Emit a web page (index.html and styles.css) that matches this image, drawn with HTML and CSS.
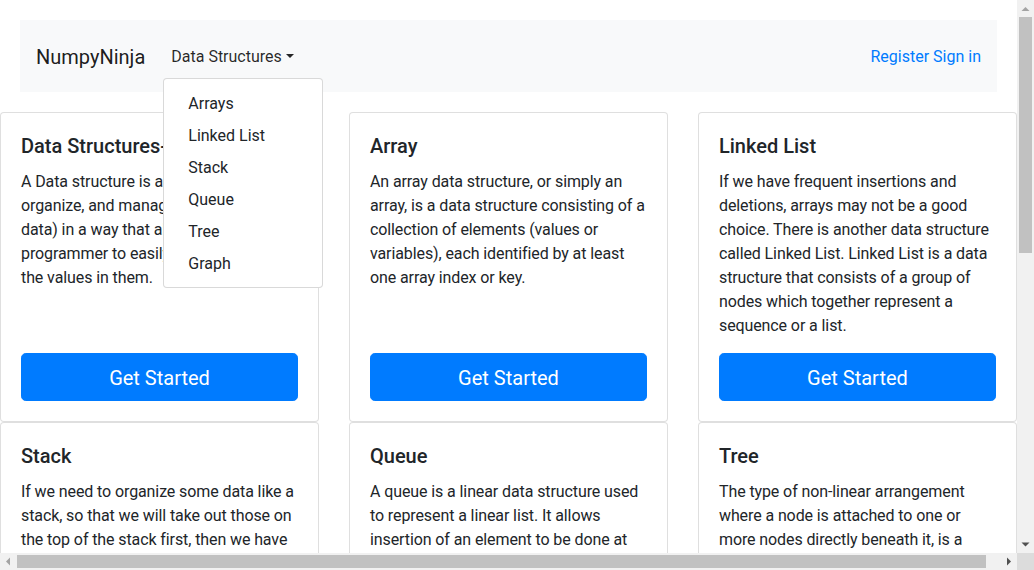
FILE: index.html
```html
<!DOCTYPE html>
<html lang="en">
<head>
<meta charset="utf-8">
<title>NumpyNinja</title>
<link rel="stylesheet" href="styles.css">
</head>
<body>
<div class="page">
<nav class="navbar">
  <a class="brand" href="#">NumpyNinja</a>
  <div class="dropdown">
    <a class="nav-link dropdown-toggle" href="#">Data Structures</a>
    <div class="dropdown-menu">
      <a class="dropdown-item" href="#">Arrays</a>
      <a class="dropdown-item" href="#">Linked List</a>
      <a class="dropdown-item" href="#">Stack</a>
      <a class="dropdown-item" href="#">Queue</a>
      <a class="dropdown-item" href="#">Tree</a>
      <a class="dropdown-item" href="#">Graph</a>
    </div>
  </div>
  <div class="nav-right">
    <a class="auth-link" href="#">Register</a> <a class="auth-link" href="#">Sign in</a>
  </div>
</nav>
<div class="row">
  <div class="col">
    <div class="card">
      <h5 class="card-title">Data Structures-Introduction</h5>
      <p class="card-text">A Data structure is a way to store, organize, and manage the data (raw data) in a way that always helps a programmer to easily find and retrieve the values in them.</p>
      <a class="btn" href="#">Get Started</a>
    </div>
  </div>
  <div class="col">
    <div class="card">
      <h5 class="card-title">Array</h5>
      <p class="card-text">An array data structure, or simply an array, is a data structure consisting of a collection of elements (values or variables), each identified by at least one array index or key.</p>
      <a class="btn" href="#">Get Started</a>
    </div>
  </div>
  <div class="col">
    <div class="card">
      <h5 class="card-title">Linked List</h5>
      <p class="card-text">If we have frequent insertions and deletions, arrays may not be a good choice. There is another data structure called Linked List. Linked List is a data structure that consists of a group of nodes which together represent a sequence or a list.</p>
      <a class="btn" href="#">Get Started</a>
    </div>
  </div>
  <div class="col">
    <div class="card">
      <h5 class="card-title">Stack</h5>
      <p class="card-text">If we need to organize some data like a stack, so that we will take out those on the top of the stack first, then we have to use the Stack data structure. It follows the Last In First Out (LIFO) principle.</p>
      <a class="btn" href="#">Get Started</a>
    </div>
  </div>
  <div class="col">
    <div class="card">
      <h5 class="card-title">Queue</h5>
      <p class="card-text">A queue is a linear data structure used to represent a linear list. It allows insertion of an element to be done at one end and deletion of an element to be done at the other end.</p>
      <a class="btn" href="#">Get Started</a>
    </div>
  </div>
  <div class="col">
    <div class="card">
      <h5 class="card-title">Tree</h5>
      <p class="card-text">The type of non-linear arrangement where a node is attached to one or more nodes directly beneath it, is a tree. The topmost node is called the root of the tree.</p>
      <a class="btn" href="#">Get Started</a>
    </div>
  </div>
  <div class="col">
    <div class="card">
      <h5 class="card-title">Graph</h5>
      <p class="card-text">A graph is a non-linear data structure consisting of nodes (vertices) and the edges that connect pairs of those nodes together.</p>
      <a class="btn" href="#">Get Started</a>
    </div>
  </div>
</div>
</div>

<div class="vscroll" aria-hidden="true">
  <div class="sb-btn"><svg width="17" height="17" viewBox="0 0 17 17"><path d="M4.5 11h8L8.5 7z" fill="#a3a3a3"/></svg></div>
  <div class="sb-track v"><div class="sb-thumb v"></div></div>
  <div class="sb-btn"><svg width="17" height="17" viewBox="0 0 17 17"><path d="M4.5 6.5h8L8.5 10.5z" fill="#505050"/></svg></div>
</div>
<div class="hscroll" aria-hidden="true">
  <div class="sb-btn"><svg width="17" height="17" viewBox="0 0 17 17"><path d="M10 4.5v8L6 8.5z" fill="#a3a3a3"/></svg></div>
  <div class="sb-track h"><div class="sb-thumb h"></div></div>
  <div class="sb-btn"><svg width="17" height="17" viewBox="0 0 17 17"><path d="M7 4.5v8L11 8.5z" fill="#505050"/></svg></div>
</div>
<div class="sb-corner" aria-hidden="true"></div>
</body>
</html>
```
FILE: styles.css
```css
* { box-sizing: border-box; }
html, body { margin: 0; }
html { overflow: hidden; }
body {
  font-family: Roboto, "Helvetica Neue", Arial, "Noto Sans", sans-serif;
  font-size: 16px;
  line-height: 1.5;
  color: #212529;
  background: #fff;
}
a { text-decoration: none; }

.page { width: 1017px; }

/* browser scrollbars (drawn over the page edge) */
.vscroll {
  position: fixed;
  top: 0;
  right: 0;
  width: 17px;
  height: 553px;
  background: #f1f1f1;
  display: flex;
  flex-direction: column;
  z-index: 100;
}
.hscroll {
  position: fixed;
  left: 0;
  bottom: 0;
  width: 1017px;
  height: 17px;
  background: #f1f1f1;
  display: flex;
  z-index: 100;
}
.sb-corner {
  position: fixed;
  right: 0;
  bottom: 0;
  width: 17px;
  height: 17px;
  background: #dcdcdc;
  z-index: 100;
}
.sb-btn { flex: 0 0 17px; width: 17px; height: 17px; }
.sb-btn svg { display: block; }
.sb-track { flex: 1; display: flex; }
.sb-track.v { flex-direction: column; padding: 0 2px; }
.sb-track.h { padding: 2px 0; }
.sb-thumb { background: #c1c1c1; }
.sb-thumb.v { height: 236px; }
.sb-thumb.h { width: 969px; }

.navbar {
  margin: 20px;
  padding: 16px;
  background: #f8f9fa;
  display: flex;
  align-items: center;
}
.brand {
  font-size: 20px;
  line-height: 30px;
  padding: 6px 0 4px;
  margin-right: 18px;
  color: rgba(0,0,0,.9);
}
.dropdown { position: relative; }
.nav-link {
  display: block;
  padding: 9px 8px 7px;
  color: rgba(0,0,0,.85);
}
.dropdown-toggle::after {
  content: "";
  display: inline-block;
  margin-left: .255em;
  vertical-align: .255em;
  border-top: .3em solid;
  border-right: .3em solid transparent;
  border-left: .3em solid transparent;
  border-bottom: 0;
}
.dropdown-menu {
  position: absolute;
  top: 100%;
  left: 0;
  z-index: 10;
  margin-top: 2px;
  min-width: 160px;
  padding: 8px 0;
  background: #fff;
  border: 1px solid rgba(0,0,0,.15);
  border-radius: 4px;
}
.dropdown-item {
  display: block;
  padding: 5px 24px 3px;
  color: #212529;
  white-space: nowrap;
}
.nav-right { margin-left: auto; padding-top: 2px; }
.auth-link { color: #007bff; }

.row {
  display: flex;
  flex-wrap: wrap;
  margin: 0 -15px;
}
.col {
  flex: 0 0 33.3333%;
  max-width: 33.3333%;
  padding: 0 15px;
}
.card {
  height: 100%;
  display: flex;
  flex-direction: column;
  padding: 20px;
  border: 1px solid rgba(0,0,0,.125);
  border-radius: 4px;
  background: #fff;
}
.card-title {
  margin: 0 0 11px;
  padding-top: 1px;
  font-size: 20px;
  font-weight: 500;
  line-height: 1.2;
}
.card-text { margin: 0 0 15px; padding-top: 1px; letter-spacing: -0.1px; }
.btn {
  margin-top: auto;
  display: block;
  text-align: center;
  padding: 9px 16px 7px;
  font-size: 20px;
  line-height: 1.5;
  color: #fff;
  background: #007bff;
  border: 1px solid #007bff;
  border-radius: 4.8px;
}
```
